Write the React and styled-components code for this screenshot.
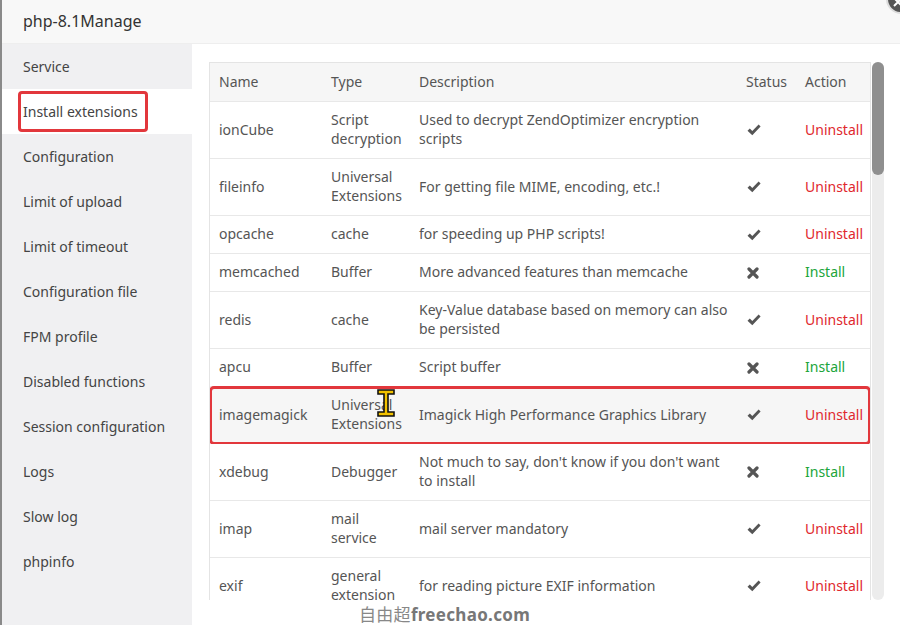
import styled, { createGlobalStyle } from "styled-components";

const GlobalStyle = createGlobalStyle`
  html, body { margin: 0; padding: 0; background: #fff; }
  body {
    font-family: "Noto Sans", "Noto Sans CJK SC", sans-serif;
    color: #555;
    overflow: hidden;
  }
`;

const menu = [
  "Service",
  "Install extensions",
  "Configuration",
  "Limit of upload",
  "Limit of timeout",
  "Configuration file",
  "FPM profile",
  "Disabled functions",
  "Session configuration",
  "Logs",
  "Slow log",
  "phpinfo",
];

const rows = [
  { name: "ionCube", type: "Script decryption", desc: "Used to decrypt ZendOptimizer encryption scripts", on: true },
  { name: "fileinfo", type: "Universal Extensions", desc: "For getting file MIME, encoding, etc.!", on: true },
  { name: "opcache", type: "cache", desc: "for speeding up PHP scripts!", on: true },
  { name: "memcached", type: "Buffer", desc: "More advanced features than memcache", on: false },
  { name: "redis", type: "cache", desc: "Key-Value database based on memory can also be persisted", on: true },
  { name: "apcu", type: "Buffer", desc: "Script buffer", on: false },
  { name: "imagemagick", type: "Universal Extensions", desc: "Imagick High Performance Graphics Library", on: true, mark: true },
  { name: "xdebug", type: "Debugger", desc: "Not much to say, don't know if you don't want to install", on: false },
  { name: "imap", type: "mail service", desc: "mail server mandatory", on: true },
  { name: "exif", type: "general extension", desc: "for reading picture EXIF information", on: true },
];

const Check = () => (
  <svg width="14" height="12" viewBox="0 0 14 12">
    <path d="M0.5 6.8 L2.8 4.6 L5.3 7.1 L11.6 0.6 L13.6 2.6 L5.3 11.2 Z" fill="#555" />
  </svg>
);

const Cross = () => (
  <svg width="12" height="12" viewBox="0 0 12 12">
    <path d="M2 2 L10 10 M10 2 L2 10" stroke="#555" strokeWidth="3.2" strokeLinecap="round" />
  </svg>
);

const Cursor = () => (
  <CursorMark width="20" height="30" viewBox="0 0 20 30">
    <path
      d="M2 2 H18 V6 H12 V24 H18 V28 H2 V24 H8 V6 H2 Z"
      fill="#f2c200"
      stroke="#111"
      strokeWidth="1.6"
    />
  </CursorMark>
);

const App = () => (
  <>
    <GlobalStyle />
    <Window>
      <Header>
        <Title>php-8.1Manage</Title>
        <CloseBtn>
          <svg width="10" height="10" viewBox="0 0 10 10">
            <path d="M1 1 L9 9 M9 1 L1 9" stroke="#fff" strokeWidth="2" />
          </svg>
        </CloseBtn>
      </Header>
      <Body>
        <Sidebar>
          {menu.map((m) => (
            <MenuItem key={m} active={m === "Install extensions"}>
              {m === "Install extensions" ? <Boxed>{m}</Boxed> : m}
            </MenuItem>
          ))}
        </Sidebar>
        <Content>
          <TableArea>
            <Table>
              <HeadRow>
                <Cell>Name</Cell>
                <Cell>Type</Cell>
                <Cell>Description</Cell>
                <Cell>Status</Cell>
                <Cell>Action</Cell>
              </HeadRow>
              {rows.map((r) => (
                <Row key={r.name} mark={r.mark}>
                  <Cell>{r.name}</Cell>
                  <Cell>{r.type}</Cell>
                  <Cell tight>{r.desc}</Cell>
                  <Cell center>{r.on ? <Check /> : <Cross />}</Cell>
                  <Cell>
                    <Action install={!r.on}>{r.on ? "Uninstall" : "Install"}</Action>
                  </Cell>
                  {r.mark && <Cursor />}
                </Row>
              ))}
            </Table>
            <Track>
              <Thumb />
            </Track>
          </TableArea>
          <Watermark>
            <Cjk>自由超</Cjk>freechao.com
          </Watermark>
        </Content>
      </Body>
    </Window>
  </>
);

const Window = styled.div`
  width: 900px;
  height: 625px;
  display: flex;
  flex-direction: column;
  border-left: 2px solid #8a8a8a;
  box-sizing: border-box;
  overflow: hidden;
  position: relative;
`;

const Header = styled.div`
  height: 44px;
  flex-shrink: 0;
  background: #f8f8f8;
  display: flex;
  align-items: center;
  padding-left: 21px;
  border-bottom: 1px solid #eee;
  box-sizing: border-box;
`;

const Title = styled.div`
  font-size: 16px;
  color: #333;
  margin-top: -2px;
`;

const CloseBtn = styled.div`
  position: absolute;
  right: -16px;
  top: -16px;
  width: 30px;
  height: 30px;
  border-radius: 50%;
  background: #555;
  border: 2px solid #ddd;
  display: flex;
  align-items: flex-end;
  justify-content: flex-start;
  padding: 0 0 5px 5px;
  box-sizing: border-box;
`;

const Body = styled.div`
  flex: 1;
  display: flex;
  min-height: 0;
`;

const Sidebar = styled.div`
  width: 190px;
  flex-shrink: 0;
  background: #f0f0f2;
  display: flex;
  flex-direction: column;
`;

const MenuItem = styled.div`
  height: 45px;
  display: flex;
  align-items: center;
  padding-left: 21px;
  font-size: 14px;
  color: #444;
  background: ${(p) => (p.active ? "#fff" : "transparent")};
`;

const Boxed = styled.span`
  border: 3px solid #e2373c;
  border-radius: 4px;
  padding: 8px 7px 8px 2px;
  margin-left: -5px;
`;

const Content = styled.div`
  flex: 1;
  display: flex;
  flex-direction: column;
  padding: 18px 16px 0 17px;
  min-width: 0;
`;

const TableArea = styled.div`
  display: flex;
  height: 538px;
  flex-shrink: 0;
  gap: 1px;
`;

const Table = styled.div`
  width: 662px;
  border: 1px solid #e4e4e4;
  border-bottom: none;
  overflow: hidden;
  font-size: 14px;
`;

const cols = "112px 88px 327px 59px 1fr";

const HeadRow = styled.div`
  display: grid;
  grid-template-columns: ${cols};
  height: 38px;
  align-items: center;
  background: #f6f6f6;
  color: #555;
  border-bottom: 1px solid #e8e8e8;
  padding-bottom: 1px;
  box-sizing: border-box;
  height: 39px;
`;

const Row = styled.div`
  display: grid;
  grid-template-columns: ${cols};
  align-items: center;
  padding: 8px 0 10px;
  line-height: 19px;
  border-bottom: 1px solid #e8e8e8;
  color: #555;
  position: relative;
  background: ${(p) => (p.mark ? "#f6f6f6" : "#fff")};
  ${(p) => p.mark && `outline: 3px solid #e2373c; outline-offset: -2px; border-radius: 4px;`}
`;

const Cell = styled.div`
  padding: 0 ${(p) => (p.tight ? "2px" : "10px")} 0 9px;
  ${(p) => p.center && `display: flex; padding-left: 10px; padding-top: 2px;`}
`;

const Action = styled.span`
  color: ${(p) => (p.install ? "#20a53a" : "#e0282d")};
`;

const CursorMark = styled.svg`
  position: absolute;
  left: 166px;
  top: 1px;
`;

const Track = styled.div`
  width: 12px;
  background: #ececec;
  border-radius: 6px;
  display: flex;
  flex-direction: column;
`;

const Thumb = styled.div`
  height: 113px;
  background: #8f8f8f;
  border-radius: 6px;
`;

const Watermark = styled.div`
  padding-left: 150px;
  margin-top: 5px;
  line-height: 20px;
  font-size: 17px;
  font-weight: bold;
  color: #777;
  letter-spacing: 0.3px;
`;

const Cjk = styled.span`
  font-weight: normal;
  color: #888;
`;

export default App;
